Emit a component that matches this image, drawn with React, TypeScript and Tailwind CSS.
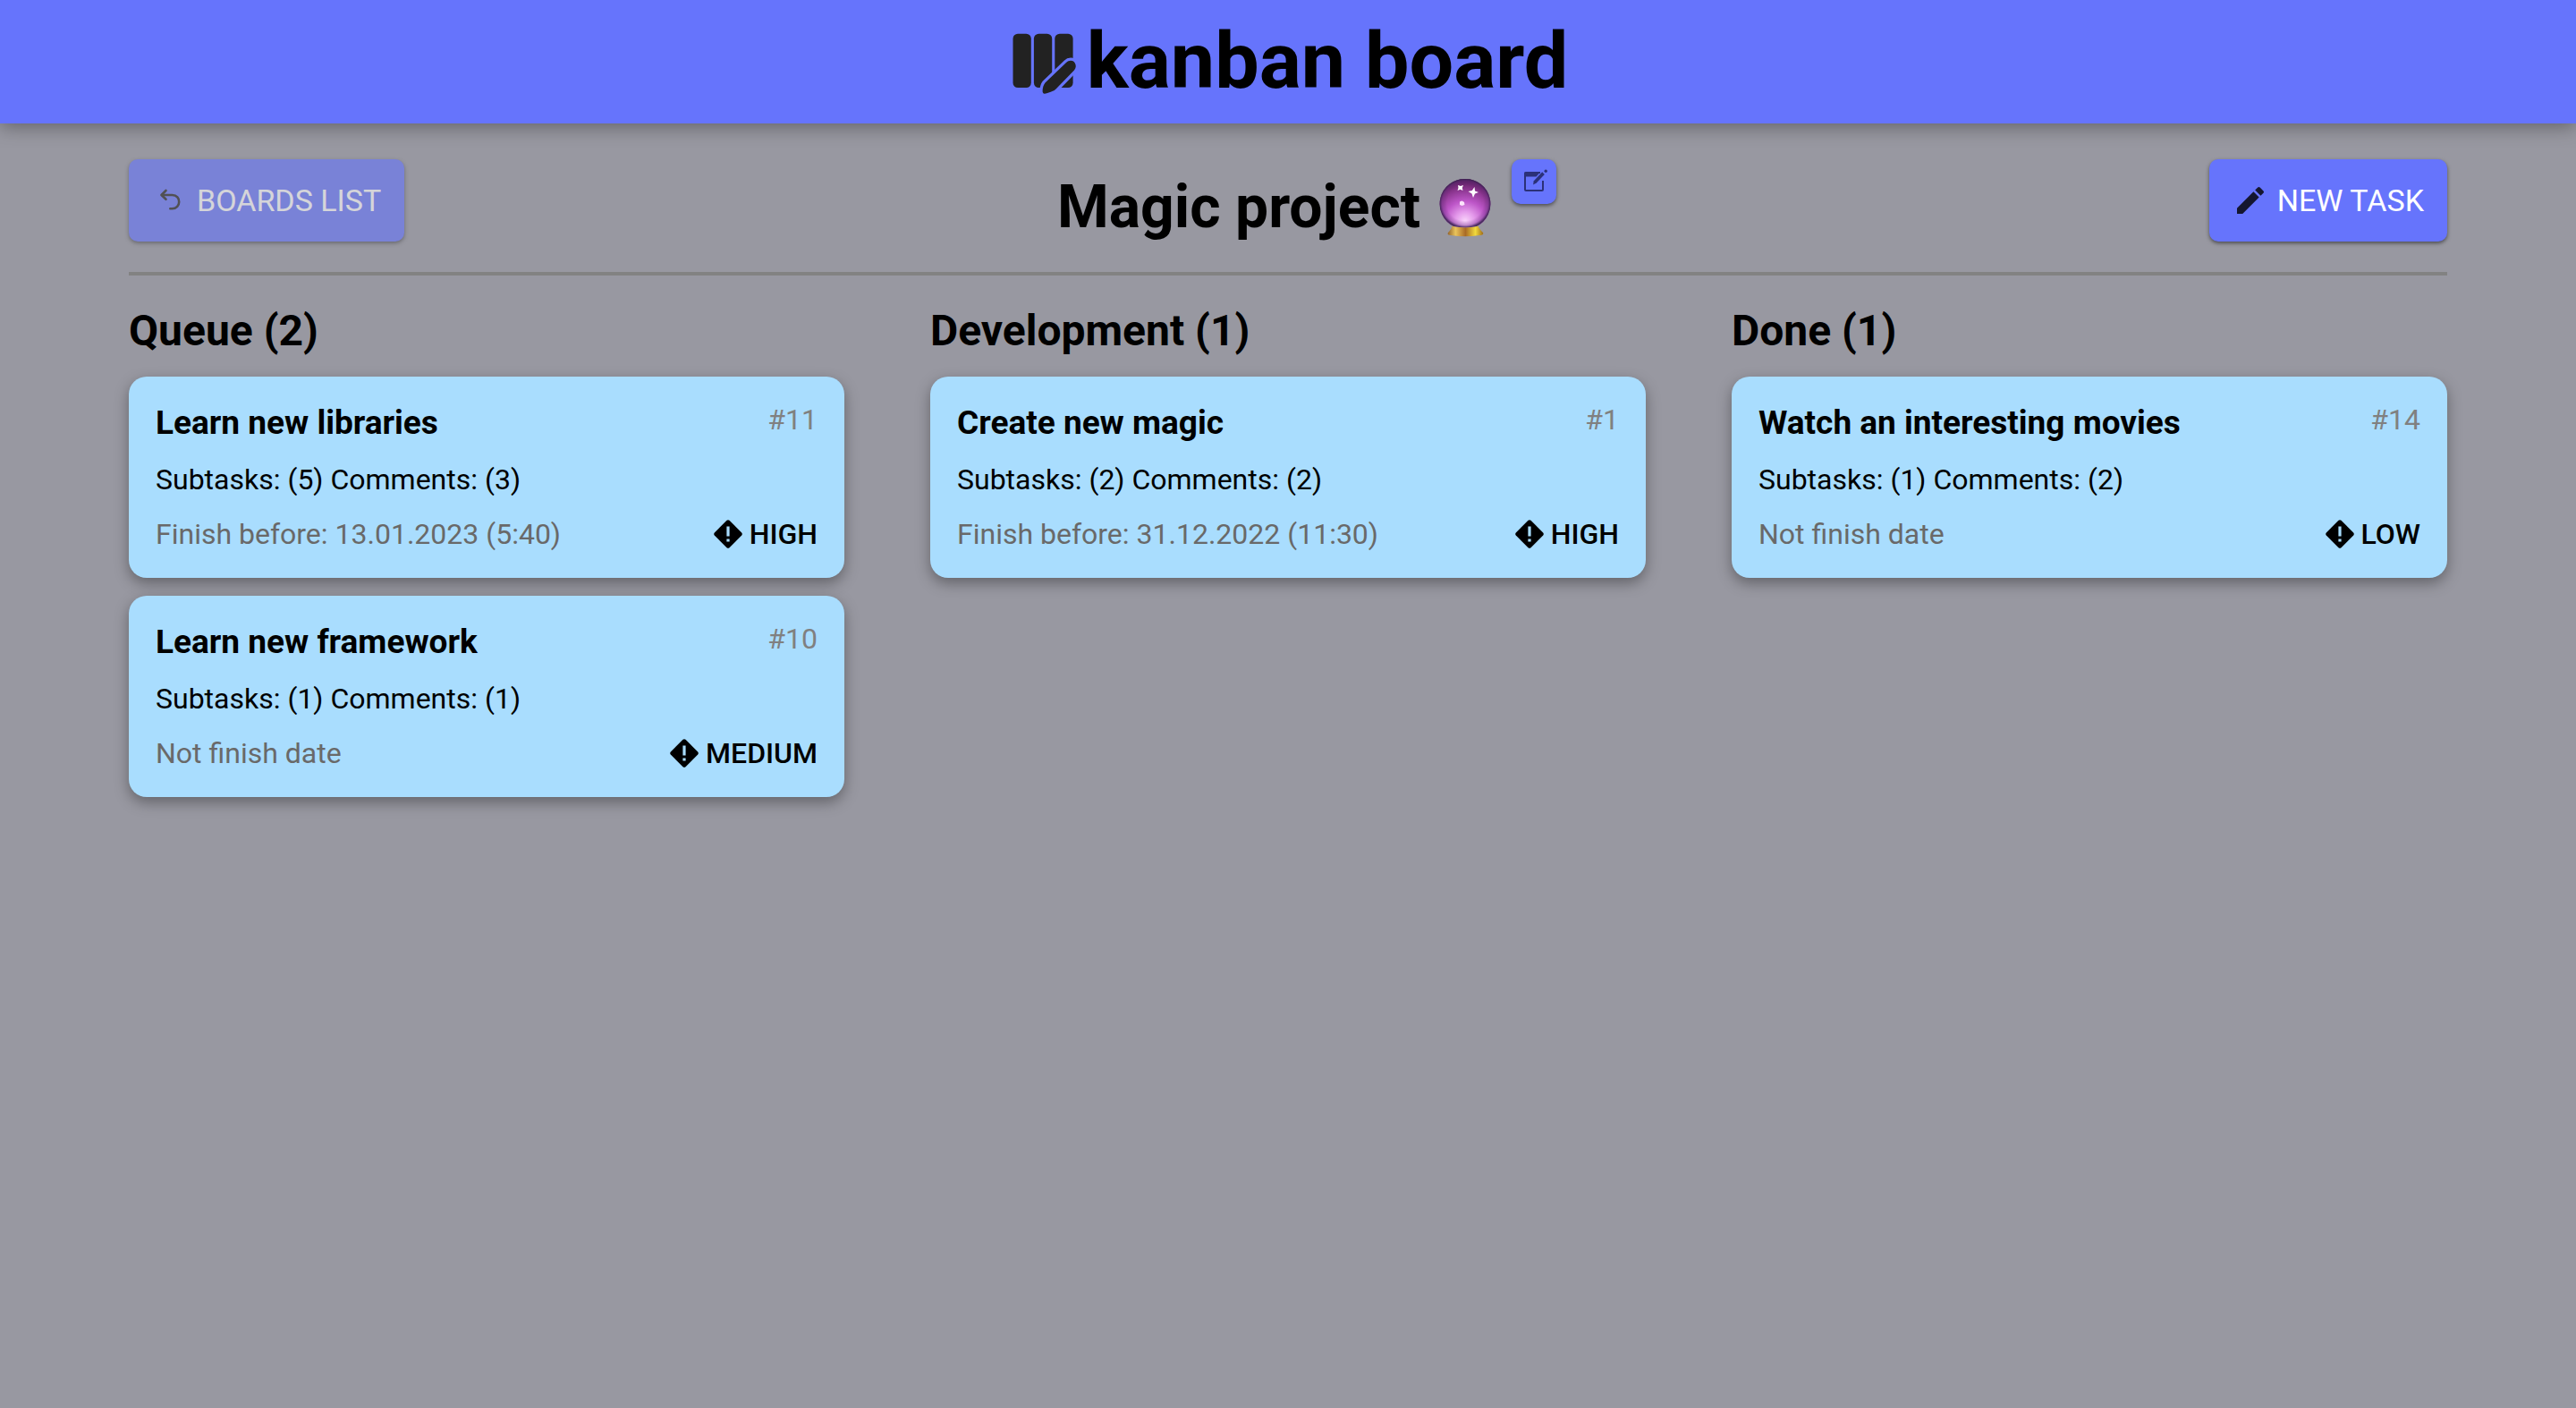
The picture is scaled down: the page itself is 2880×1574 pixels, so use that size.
type Task = {
  id: number;
  title: string;
  subtasks: number;
  comments: number;
  finish: string | null;
  priority: "HIGH" | "MEDIUM" | "LOW";
};

type Column = { name: string; tasks: Task[] };

const columns: Column[] = [
  {
    name: "Queue",
    tasks: [
      { id: 11, title: "Learn new libraries", subtasks: 5, comments: 3, finish: "13.01.2023 (5:40)", priority: "HIGH" },
      { id: 10, title: "Learn new framework", subtasks: 1, comments: 1, finish: null, priority: "MEDIUM" },
    ],
  },
  {
    name: "Development",
    tasks: [
      { id: 1, title: "Create new magic", subtasks: 2, comments: 2, finish: "31.12.2022 (11:30)", priority: "HIGH" },
    ],
  },
  {
    name: "Done",
    tasks: [
      { id: 14, title: "Watch an interesting movies", subtasks: 1, comments: 2, finish: null, priority: "LOW" },
    ],
  },
];

function LogoIcon() {
  const pen =
    "M65 46 C68 43 72.500 43 74.500 46 C76.500 49 76 52 74 54.500 L55 74 C53.500 76 52 77 50 77.800 C47 79 44 80.500 41 80.700 C39 80.800 38.500 79 38.600 77 C38.800 74 39.600 71 41.500 68.500 Z";
  return (
    <svg viewBox="0 0 88 88" className="size-[88px]" aria-hidden="true">
      <g fill="#222">
        <rect x="5.500" y="13.700" width="20.300" height="60.300" rx="5.500" />
        <rect x="28.900" y="13.700" width="20.300" height="60.300" rx="5.500" />
        <rect x="52.300" y="13.700" width="20.300" height="60.300" rx="5.500" />
      </g>
      <path d={pen} fill="#6674fc" stroke="#6674fc" strokeWidth="6.500" strokeLinejoin="round" />
      <path d={pen} fill="#222" />
    </svg>
  );
}

function BackIcon() {
  return (
    <svg viewBox="0 0 40 40" className="size-10" fill="none" stroke="#222" strokeWidth="2.600" strokeLinecap="round" strokeLinejoin="round" aria-hidden="true">
      <path d="M15.500 9 L10.500 14 L15.500 18.800" />
      <path d="M11 14 H22.500 C33 14 32.500 29.300 22.500 29.300 H20.300" />
    </svg>
  );
}

function PencilIcon() {
  return (
    <svg viewBox="0 0 24 24" className="size-10" fill="#14162f" aria-hidden="true">
      <path d="M3 17.250V21h3.750L17.810 9.940l-3.750-3.750L3 17.250zM20.710 7.040a.996.996 0 0 0 0-1.410l-2.340-2.340a.996.996 0 0 0-1.410 0l-1.830 1.830 3.750 3.750 1.830-1.830z" />
    </svg>
  );
}

function EditIcon() {
  return (
    <svg viewBox="0 0 30 30" className="size-[30px]" aria-hidden="true">
      <path d="M22 5 H6 Q5 5 5 6 V24 Q5 25 6 25 H24 Q25 25 25 24 V14" fill="none" stroke="#2b3178" strokeWidth="2" strokeLinejoin="round" />
      <path d="M4.500 4.500 H22 L17.500 9.500 H4.500 Z" fill="#2b3178" />
      <path d="M24.200 4.300 L26.800 6.900 L17.800 16.600 L14.100 18.400 L14.600 14.600 Z" fill="#2b3178" />
      <circle cx="28.200" cy="3.300" r="1.700" fill="#2b3178" />
    </svg>
  );
}

function CrystalBall() {
  return (
    <svg viewBox="0 0 66 76" className="h-[76px] w-[66px]" role="img" aria-label="Crystal ball">
      <defs>
        <radialGradient id="ball" cx="0.500" cy="0.860" r="0.900">
          <stop offset="0" stopColor="#f8d2fa" />
          <stop offset="0.200" stopColor="#e59cec" />
          <stop offset="0.450" stopColor="#bd56c8" />
          <stop offset="0.750" stopColor="#843187" />
          <stop offset="1" stopColor="#48164e" />
        </radialGradient>
        <radialGradient id="rim">
          <stop offset="0.720" stopColor="#4f2266" stopOpacity="0" />
          <stop offset="0.900" stopColor="#582b75" stopOpacity="0.300" />
          <stop offset="1" stopColor="#34204c" stopOpacity="0.850" />
        </radialGradient>
        <linearGradient id="base">
          <stop offset="0" stopColor="#94652c" />
          <stop offset="0.220" stopColor="#eac45b" />
          <stop offset="0.500" stopColor="#a96a25" />
          <stop offset="0.780" stopColor="#f2da3c" />
          <stop offset="1" stopColor="#a06c1a" />
        </linearGradient>
      </defs>
      <path d="M18 58 H46 C48 62 50 64 52 66 C53 68 51 69 48 69 Q32 71.500 16 69 C13 69 12 68 13 66 C15 64 17 61 18 58 Z" fill="url(#base)" />
      <path d="M32 6 A28 28 0 0 1 45 59 Q32 61.500 19 59 A28 28 0 0 1 32 6 Z" fill="url(#ball)" />
      <path d="M32 6 A28 28 0 0 1 45 59 Q32 61.500 19 59 A28 28 0 0 1 32 6 Z" fill="url(#rim)" />
      <path d="M24 13 L27 14 L30 13 L28.800 16 L29.500 19 L26.500 17.800 L23.500 19 L24.500 16 Z" fill="#fff" />
      <path d="M42.500 15 L43 19.500 L47 21 L43 22.500 L41 27 L39.500 22.500 L35.500 20 L39.800 19 Z" fill="#fff" />
      <path d="M26 31.500 L28.500 30.500 L31 32 L31.500 35 L28.500 36 L26 35 Z" fill="#fbe4fb" />
    </svg>
  );
}

function PriorityIcon() {
  return (
    <svg viewBox="0 0 32 32" className="size-8" aria-hidden="true">
      <path d="M14.500 0.800 Q16 -0.400 17.500 0.800 L31.200 14.500 Q32.400 16 31.200 17.500 L17.500 31.200 Q16 32.400 14.500 31.200 L0.800 17.500 Q-0.400 16 0.800 14.500 Z" />
      <path d="M14.400 7.500 H17.600 V18.500 H14.400 Z M14.400 21.500 H17.600 V24.500 H14.400 Z" fill="#a9ddfe" />
    </svg>
  );
}

function TaskCard({ task }: { task: Task }) {
  return (
    <article className="rounded-[20px] bg-[#a9ddfe] p-[30px] shadow-[0_6px_16px_rgba(0,0,0,0.35)]">
      <div className="mb-[22px] flex items-start justify-between">
        <h3 className="text-[37px] leading-[44px] font-bold">{task.title}</h3>
        <span className="text-[32px] leading-9 text-[#808080]">#{task.id}</span>
      </div>
      <p className="mb-[23px] text-[32px] leading-[38px]">
        Subtasks: ({task.subtasks}) Comments: ({task.comments})
      </p>
      <div className="flex items-center justify-between text-[32px] leading-[38px]">
        <span className="text-[#696969]">{task.finish ? `Finish before: ${task.finish}` : "Not finish date"}</span>
        <span className="flex items-center gap-2 font-medium">
          <PriorityIcon />
          {task.priority}
        </span>
      </div>
    </article>
  );
}

const action =
  "flex h-[92px] cursor-pointer items-center gap-[10px] rounded-[10px] bg-[#6674fc] px-[26px] text-[34px] leading-10 text-white uppercase shadow-[0_2px_4px_rgba(0,0,0,0.5)] disabled:cursor-default disabled:opacity-60";

export default function App() {
  return (
    <div className="min-h-screen bg-[#9898a1] font-['Roboto',sans-serif] text-black">
      <header className="flex items-center justify-center bg-[#6674fc] pt-4 pb-[18px] shadow-[0_4px_20px_rgba(0,0,0,0.35)]">
        <LogoIcon />
        <h1 className="text-[88px] leading-[104px] font-bold">kanban board</h1>
      </header>

      <main className="px-[5%] pt-10">
        <div className="flex items-start justify-between border-b-4 border-[#828282] pb-[18px]">
          <button type="button" disabled className={action}>
            <BackIcon />
            Boards list
          </button>
          <div className="flex items-start">
            <h2 className="flex items-center gap-[18px] text-[66px] leading-[108px] font-bold">
              Magic project
              <CrystalBall />
            </h2>
            <button
              type="button"
              aria-label="Edit board"
              className="ml-[18px] flex size-[50px] cursor-pointer items-center justify-center rounded-[10px] bg-[#6674fc] shadow-[0_2px_4px_rgba(0,0,0,0.5)]"
            >
              <EditIcon />
            </button>
          </div>
          <button type="button" className={action}>
            <PencilIcon />
            New task
          </button>
        </div>

        <div className="grid grid-cols-3 gap-24 pt-[34px]">
          {columns.map((column) => (
            <section key={column.name}>
              <h2 className="mb-[23px] text-[48px] leading-[56px] font-bold">
                {column.name} ({column.tasks.length})
              </h2>
              <div className="flex flex-col gap-5">
                {column.tasks.map((task) => (
                  <TaskCard key={task.id} task={task} />
                ))}
              </div>
            </section>
          ))}
        </div>
      </main>
    </div>
  );
}
